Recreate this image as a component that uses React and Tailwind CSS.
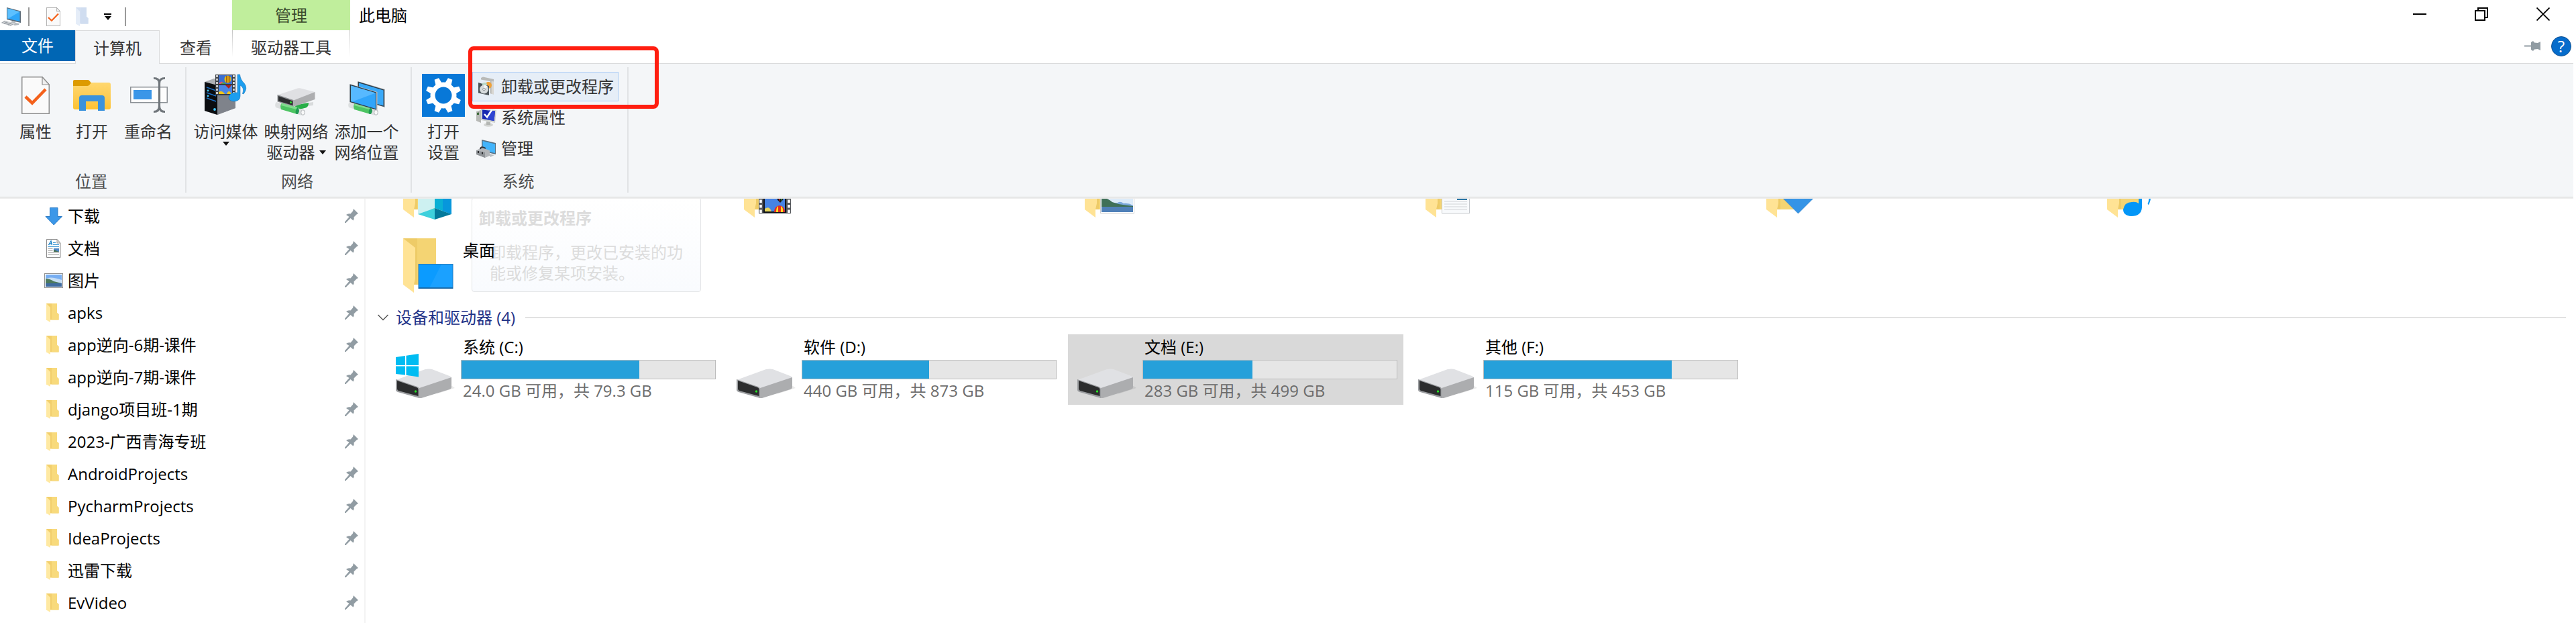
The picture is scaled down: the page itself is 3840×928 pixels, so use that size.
import React from "react";

function ComputerIcon() {
  return (
    <svg className="h-9 w-8 shrink-0" viewBox="0 0 32 36" aria-hidden="true">
      <path d="M10 4 L31 9.500 V27 L10 22 Z" fill="#5c6b78" />
      <path d="M11 5.500 L29.500 10.500 V25 L11 20.500 Z" fill="#2fa6f8" />
      <path d="M11 5.500 L29.500 10.500 L12 20.700 L11 20.500 Z" fill="#5cc0ff" />
      <path d="M18 24 L23 25 V27 L29 28 L28 30 L22 31 L15 28 Z" fill="#b3b9be" />
      <path d="M7 23.500 L23 28 L16 32 L1 27 Z" fill="#d3d6d9" />
      <path d="M5 25 L19 29.500 M3 26.500 L17 31 M11 25 L6 28.500 M17 26.500 L12 30.500" stroke="#989fa5" strokeWidth="1" />
    </svg>
  );
}

function CheckedPage({ className }) {
  return (
    <svg className={className} viewBox="0 0 42 56" preserveAspectRatio="none" aria-hidden="true">
      <path d="M.75 .75 H31 L41.250 12 V55.250 H.75 Z" fill="#fafafa" stroke="#8d8d8d" strokeWidth="1.500" />
      <path d="M31 .75 V12 H41.250 Z" fill="#efefef" stroke="#8d8d8d" strokeWidth="1.200" />
      <path d="M6 30 L16 39.500 L36 19" fill="none" stroke="#f4611b" strokeWidth="4.500" />
    </svg>
  );
}

function SmallFolder({ pale }) {
  return (
    <svg className="h-7 w-[19px]" viewBox="0 0 19 28" aria-hidden="true">
      <path d="M0 0 H16 V14 L18.500 16 V24.500 H0 Z" fill={pale ? "#d3dff1" : "#f2cf6c"} />
      <path d="M8 0 H16 V14 L18.500 16 V24.500 H8 Z" fill={pale ? "#d0ddf0" : "#f8da7c"} />
      <path d="M0 0 L6 6 V28 L0 24.500 Z" fill={pale ? "#e5edf8" : "#ffe9a2"} />
    </svg>
  );
}

function OpenFolderIcon() {
  return (
    <svg className="size-16" viewBox="0 0 64 64" aria-hidden="true">
      <defs>
        <linearGradient id="folderFront" x1="0" y1="0" x2="0" y2="1">
          <stop offset="0" stopColor="#ffd76f" />
          <stop offset=".6" stopColor="#fdcb51" />
          <stop offset="1" stopColor="#fdc22f" />
        </linearGradient>
      </defs>
      <path d="M4 11 Q4 9 6 9 H26 Q28 9 31 14 L27 20 H4 Z" fill="#dd9b00" />
      <path d="M4 18 H25 Q28 18 31 13 H57 Q60 13 60 16 V50 Q60 53 57 53 H7 Q4 53 4 50 Z" fill="url(#folderFront)" />
      <path d="M13 55 V36 Q13 32 17 32 H47 Q51 32 51 36 V55 H41 V41 H23 V55 Z" fill="#3a92dc" />
    </svg>
  );
}

function RenameIcon() {
  return (
    <svg className="size-16" viewBox="0 0 64 64" aria-hidden="true">
      <rect x="5.750" y="19.750" width="54.500" height="23" fill="#fdfdfd" stroke="#8c9196" strokeWidth="1.500" />
      <rect x="10" y="24" width="27" height="14" fill="#3a96e8" />
      <path d="M40 6.500 Q48.500 6.500 48.500 14 V48 Q48.500 56.500 40 56.500 M57 6.500 Q48.500 6.500 48.500 14 M48.500 48 Q48.500 56.500 57 56.500" fill="none" stroke="#71777c" strokeWidth="3.200" />
    </svg>
  );
}

function MediaIcon() {
  return (
    <svg className="size-16" viewBox="0 0 64 64" aria-hidden="true">
      <path d="M0 12 L14 7 L46 15 V51 L19 61 L0 55 Z" fill="#aeb1b5" />
      <path d="M0 12 L19 17 V61 L0 55 Z" fill="#0b0d10" />
      <path d="M19 17 L46 12 V51 L19 61 Z" fill="#7f838b" />
      <path d="M3 20 L17 25 M3 28 L17 33 M3 36 L17 41" stroke="#1b6fc4" strokeWidth="1.500" />
      <circle cx="5" cy="25" r="1.400" fill="#3fc8ff" />
      <circle cx="5" cy="33" r="1.400" fill="#3fc8ff" />
      <circle cx="15" cy="53" r="1.900" fill="#3fc8ff" />
      <rect x="16" y="1" width="30" height="31" fill="#3b3e42" />
      <path d="M18.500 2 V31 M43.500 2 V31" stroke="#e8e8e8" strokeWidth="2.500" strokeDasharray="3 2" />
      <rect x="21" y="2" width="20" height="13" fill="#3c6fd0" />
      <rect x="21" y="17" width="20" height="13" fill="#4a86e6" />
      <ellipse cx="34.500" cy="8" rx="5" ry="5.500" fill="#e8b80e" />
      <path d="M33 3 V13 M36.500 3 V13" stroke="#8a3b12" strokeWidth="1.300" />
      <path d="M21 15 Q25 8 30 15 Z" fill="#e0526b" />
      <path d="M24 15 Q28 11 32 15 Z" fill="#4aa53b" />
      <path d="M31 17 H40 L36 22 Z" fill="#b3201b" />
      <path d="M21 30 V27 Q26 24 30 30 Z M33 30 Q36 22 40 30 Z" fill="#f0c419" />
      <path d="M49 1 H52.500 Q53.500 9 59 14 Q65 21 58 30 L56.500 29.500 Q60 21 53 17 V33 Q53 41 43 41 Q35 40 36 34 Q38 27 49 28 Z" fill="#1b9eef" stroke="#1673b8" strokeWidth=".6" />
    </svg>
  );
}

function NetPipe() {
  return (
    <g>
      <path d="M2 42 L44 54 Q46 58 43 61.500 L38 61.500 L1 50 Q-1 45 2 42 Z" fill="#dcdfe0" />
      <path d="M10 43.500 L35 50.500 Q32 55 33 60 L9 53 Q7 47 10 43.500 Z" fill="#4cc462" />
      <path d="M10 43.500 L35 50.500 L33.500 53.500 L9 47 Z" fill="#7fdc8d" />
      <path d="M33.500 50 Q38 54 34 60 L31 59.500 Q29.500 54 33.500 50 Z" fill="#1f9a52" />
      <ellipse cx="41.500" cy="57.500" rx="2.800" ry="3.800" fill="#f7f8f8" stroke="#b3b7ba" strokeWidth="1" />
    </g>
  );
}

function MapDriveIcon() {
  return (
    <svg className="size-16" viewBox="0 0 64 64" aria-hidden="true">
      <path d="M44 44 L57 42 V47 L48 48 Z" fill="#d8dbdc" />
      <path d="M28 47 L50 43 Q50 49 46 50.500 L36 53 Z" fill="#28ae48" />
      <NetPipe />
      <path d="M3.500 31.500 L34 21.500 Q36 21 38 21.500 L59.500 27 L27.500 40 Z" fill="#dfe0e3" />
      <path d="M27.500 39.500 L59.500 27 V38 L29 48.500 H27.500 Z" fill="#adaeb0" />
      <path d="M3.500 31 L27.500 39 V48.500 L3.500 41.500 Z" fill="#8e9194" />
      <path d="M5 33 L26.500 40.500 V47 L5 40.500 Z" fill="#2c2e30" />
      <circle cx="23.500" cy="42.500" r="1.500" fill="#2ee02e" />
    </svg>
  );
}

function AddNetworkIcon() {
  return (
    <svg className="size-16" viewBox="0 0 64 64" aria-hidden="true">
      <g transform="translate(4 0)">
        <NetPipe />
      </g>
      <path d="M18.500 11 L59 23 V50 L18.500 38 Z" fill="#aeb4b9" />
      <path d="M18.500 11.500 L57.500 23.500 V49 L18.500 38 Z" fill="#2c3b46" />
      <path d="M20 13.500 L56.500 24.500 V47.500 L20 37 Z" fill="#3aa9f8" />
      <path d="M6.500 15 L47.500 27 V54 L6.500 42 Z" fill="#b9bec2" />
      <path d="M6.500 15.500 L46 27.500 V53.500 L6.500 42 Z" fill="#2c3b46" />
      <path d="M8 17.500 L45 28.500 V52 L8 41 Z" fill="#31a5fa" />
      <path d="M8 17.500 L45 28.500 L10 41.500 L8 41 Z" fill="#57b9ff" />
    </svg>
  );
}

function GearIcon() {
  const teeth = [22.5, 67.5, 112.5, 157.5, 202.5, 247.5, 292.5, 337.5];
  return (
    <svg className="size-16" viewBox="0 0 64 64" aria-hidden="true">
      <rect width="64" height="64" fill="#0878d8" />
      {teeth.map((a) => (
        <path key={a} d="M27 15 L28.500 5.500 H35.500 L37 15 Z" fill="#fff" transform={`rotate(${a} 32 32)`} />
      ))}
      <circle cx="32" cy="32" r="16" fill="none" stroke="#fff" strokeWidth="7" />
    </svg>
  );
}

function UninstallIcon() {
  return (
    <svg className="size-8" viewBox="0 0 32 32" aria-hidden="true">
      <path d="M8 3 L11 1.500 L27 5 V9 L8 5.500 Z" fill="#b9bab8" />
      <path d="M22 8 L27 8.500 V28 L22 26 Z" fill="#d8d7d2" />
      <path d="M22 8 L23.500 8 V27 L22 26 Z" fill="#b2b1ac" />
      <circle cx="19" cy="14" r="5" fill="#f0a23a" />
      <path d="M4 10 L9 11.500 L20 15 V29 L4 25.500 Z" fill="#4b5459" />
      <path d="M10 11 Q17 8 17 14 L10 16 Z" fill="#b9d9c8" />
      <circle cx="12.500" cy="20" r="6.500" fill="#d6dbdd" />
      <path d="M12.500 13.500 A6.500 6.500 0 0 1 18 16 L12.500 20 Z" fill="#f4f6f7" />
      <circle cx="12.500" cy="20" r="1.800" fill="#fff" stroke="#8a9196" strokeWidth="1" />
    </svg>
  );
}

function SystemIcon() {
  return (
    <svg className="size-8" viewBox="0 0 32 32" aria-hidden="true">
      <path d="M1 7 L8 5 V24 L1 21 Z" fill="#b7b9b6" />
      <path d="M2 9 L5 8.500 V12 L2 12 Z" fill="#3d6a3a" />
      <path d="M8 3 L31 5 L29 24 L8 20 Z" fill="#cfd2cf" />
      <path d="M10 4.500 L29 6.500 L27.500 21 L10 18 Z" fill="#1828b0" />
      <path d="M20 5.500 L29 6.500 L27.500 21 L16 19 Z" fill="#2f45d2" />
      <path d="M13 11 L17 15.500 L24 5" fill="none" stroke="#fff" strokeWidth="2.500" />
      <ellipse cx="19" cy="27" rx="7" ry="2.800" fill="#d2d4d2" />
      <path d="M16 22 L22 23 V27 H16 Z" fill="#b3b6b3" />
    </svg>
  );
}

function ManageIcon() {
  return (
    <svg className="size-8" viewBox="0 0 32 32" aria-hidden="true">
      <path d="M9 3 L30 8 V25 L9 20 Z" fill="#567083" />
      <path d="M10.500 5 L29 9.500 V23 L10.500 19 Z" fill="#42b4fb" />
      <path d="M20 24 L28 26 L22 29 Z" fill="#b5bbc0" />
      <path d="M1 19 L9 15 L21 19 V27 L14 30 L1 25 Z" fill="#b2b5b8" />
      <path d="M1 19 L14 22 V30 L1 25 Z" fill="#8f9397" />
      <path d="M7 17 Q8 12 15 16" fill="none" stroke="#32363a" strokeWidth="2" />
      <path d="M4 20 V23 M10 21.500 V24.500" stroke="#2a2c2e" strokeWidth="2" />
    </svg>
  );
}

function DownloadIcon() {
  return (
    <svg className="size-7" viewBox="0 0 28 28" aria-hidden="true">
      <path d="M8.500 1.500 H20 V14.500 H26.500 L14.250 27 L2 14.500 H8.500 Z" fill="#3b97e8" stroke="#2c7cc6" strokeWidth="1" />
    </svg>
  );
}

function DocumentIcon() {
  return (
    <svg className="h-7 w-[22px]" viewBox="0 0 22 28" aria-hidden="true">
      <path d="M.5 .5 H16 L21 6 V27.500 H.5 Z" fill="#fbfbfb" stroke="#8c8c8c" />
      <path d="M16 .5 V6 H21 Z" fill="#e8e8e8" stroke="#8c8c8c" strokeWidth=".8" />
      <path d="M3.500 9 L7 3 L8.500 9 M5 7 H8" fill="none" stroke="#1b82c8" strokeWidth="1.400" />
      <path d="M10 5.500 H14 M10 8.500 H19 M2.500 11.500 H19" stroke="#3a95d4" />
      <rect x="11" y="14" width="8" height="5" fill="#4f86c6" />
      <path d="M11 19 V16 L19 19 Z" fill="#3e6a4b" />
      <path d="M2.500 14.500 H9.500 M2.500 17.500 H9.500 M2.500 20.500 H19 M2.500 23.500 H19" stroke="#a9a9a9" />
    </svg>
  );
}

function PictureIcon() {
  return (
    <svg className="h-[22px] w-7" viewBox="0 0 28 22" aria-hidden="true">
      <rect x=".5" y=".5" width="27" height="21" fill="#fff" stroke="#929292" />
      <rect x="2" y="2" width="24" height="8" fill="#77aef2" />
      <path d="M2 8 Q10 4 26 10 V15 H2 Z" fill="#c5ddf4" />
      <path d="M2 8 Q8 8 14 12 L26 15 H2 Z" fill="#4d7a5e" />
      <rect x="2" y="15" width="24" height="5" fill="#3f6ba0" />
    </svg>
  );
}

function PinIcon() {
  return (
    <svg className="size-[22px]" viewBox="0 0 22 22" aria-hidden="true">
      <path d="M14 0 L21 7 L18.500 8.500 L14.500 12.500 Q15.500 15 13.500 17.500 L9.500 14 L2.500 21 L1 21 L1 19.500 L7.500 12 L3 9 Q6 6.500 9.500 7.500 L13 3.500 Z" fill="#919ca3" />
    </svg>
  );
}

function Overlay({ kind }) {
  switch (kind) {
    case "objects":
      return (
        <g>
          <path d="M33 30 L58 20 V67 L33 76 Z" fill="#cdf1f1" />
          <path d="M58 20 L83 30 V76 L58 67 Z" fill="#0ab0d4" />
          <path d="M70 25 L83 30 V76 L70 71 Z" fill="#0797dc" />
          <path d="M33 76 L58 67 V84 Z" fill="#3ed0dc" />
          <path d="M83 76 L58 67 V84 Z" fill="#04799b" />
        </g>
      );
    case "video":
      return (
        <g>
          <rect x="33" y="30" width="48" height="45" fill="#55585c" />
          <path d="M36 32 V74 M78 32 V74" stroke="#fff" strokeWidth="3.500" strokeDasharray="4.500 3" />
          <rect x="40" y="30" width="34" height="44" fill="#10131a" />
          <rect x="42" y="30" width="30" height="42" fill="#4683e4" />
          <path d="M59 50 H71 Q70 55 65 59 Q60 55 59 50 Z" fill="#161616" />
          <path d="M62 50 H65 V58 Z" fill="#d32626" />
          <path d="M66 50 H69 L66 57 Z" fill="#3cab3c" />
          <path d="M42 68 Q49 63 52 72 H42 Z" fill="#e6d55c" />
          <path d="M56 73 Q56 64 64 63 Q72 64 72 73 Z" fill="#e32b22" />
          <path d="M59 73 Q59 66 62 64 V73 Z M66 64 Q70 66 69 73 H66 Z" fill="#ffdc1f" />
        </g>
      );
    case "picture":
      return (
        <g>
          <rect x="34.500" y="30" width="50" height="44.500" fill="#fff" stroke="#cfcfcf" />
          <rect x="36" y="40" width="47" height="25" fill="#dcebfa" />
          <path d="M50 60 L60 59 Q64 56 69 60 Q76 59 83 63 V65 H50 Z" fill="#7ba8dc" />
          <path d="M36 53 Q43 50 52 58 Q60 61 68 62 L83 64 V65 H36 Z" fill="#3f7058" />
          <rect x="36" y="65" width="47" height="8" fill="#4f80b8" />
        </g>
      );
    case "document":
      return (
        <g>
          <rect x="35.500" y="30" width="41" height="44.500" fill="#f8fafc" stroke="#c4c8cc" />
          <rect x="58" y="44" width="15" height="11" fill="#2a75a5" />
          <path d="M39 57 H73 M39 61 H73 M39 65 H73 M39 69 H73" stroke="#d0d3d6" />
        </g>
      );
    case "download":
      return <path d="M50 30 H67 V53 H80.500 L58.500 75 L36.500 53 H50 Z" fill="#3594e6" stroke="#2f80c8" strokeWidth=".6" />;
    case "music":
      return (
        <g fill="#0396f7">
          <path d="M58 30 H63 V66 Q62 79 47 79 Q35 78 35 69 Q37 58 48 58 Q54 57 58 60 Z" />
          <path d="M75 46 Q78 52 73 62 L71.500 61 Q75 53 71 46 Z" />
        </g>
      );
    default:
      return (
        <g>
          <rect x="34" y="38.500" width="51" height="36" fill="#0b9bff" stroke="#2777b5" />
          <path d="M68 39 L50 74 H84.500 V39 Z" fill="#27a5ff" opacity=".6" />
          <path d="M34 74 H85" stroke="#155f9b" strokeWidth="1.500" />
        </g>
      );
  }
}

function LibraryFolder({ kind }) {
  return (
    <svg className="h-[86px] w-[97px] shrink-0" viewBox="0 0 97 86" aria-hidden="true">
      <path d="M11 0 H60 V69 H24 Z" fill="#eecb67" />
      <path d="M32 0 H60 V69 H32 Z" fill="#f4d473" />
      <path d="M11 0 L29 14 V60 L27 69 V81 L11 69 Z" fill="#ffe395" />
      <Overlay kind={kind} />
    </svg>
  );
}

function DriveIcon({ system }) {
  return (
    <svg className="h-[68px] w-[97px] shrink-0" viewBox="0 0 97 68" aria-hidden="true">
      <path d="M60 60 L84 48 L88 51 L42 66 Z" fill="#000" opacity=".08" />
      <path d="M0 39 L44 23 Q50 22 54 23 L80 33 Q83 34 83 36 L35 52 Z" fill="#e0e1e4" />
      <path d="M35 51 L83 35 V50 Q83 52 80 53 L38 66 L35 66 Z" fill="#acadaf" />
      <path d="M0 38 L32 49 Q35 50 35 53 V66 L3 57 Q0 56 0 54 Z" fill="#9b9da0" />
      <path d="M2 40 L31 50 Q33.500 51 33.500 53 V63 L4 55 Q2 54 2 52 Z" fill="#2c2d2e" />
      <circle cx="29.500" cy="56" r="1.700" fill="#25e325" />
      {system && (
        <g fill="#00bcf2">
          <path d="M0 5 L14 3 V17 H0 Z" />
          <path d="M15.500 2.700 L34 0 V17 H15.500 Z" />
          <path d="M0 18.500 H14 V31.500 L0 30 Z" />
          <path d="M15.500 18.500 H34 V34.500 L15.500 31.700 Z" />
        </g>
      )}
    </svg>
  );
}

function Caret({ className }) {
  return (
    <svg className={className} viewBox="0 0 10 6" aria-hidden="true">
      <path d="M0 0 H10 L5 6 Z" fill="#111" />
    </svg>
  );
}

function BigCommand({ icon, lines, caret, className }) {
  return (
    <button type="button" className={`flex flex-col items-center leading-[31px] whitespace-nowrap ${className}`}>
      <span className="mb-1.5 flex h-16 items-center">{icon}</span>
      {lines.map((line, i) => (
        <span key={line} className="flex items-center gap-1.5">
          {line}
          {caret === "inline" && i === lines.length - 1 && <Caret className="h-1.5 w-2.5" />}
        </span>
      ))}
      {caret === "below" && <Caret className="h-1.5 w-2.5" />}
    </button>
  );
}

function SmallCommand({ icon, label, highlighted }) {
  return (
    <button
      type="button"
      className={
        highlighted
          ? "flex h-11 items-center gap-1.5 border border-[#a8cbf5] bg-[#e6eef7] pr-1.5 pl-1 whitespace-nowrap"
          : "flex h-11 items-center gap-1.5 border border-transparent pr-1.5 pl-1 whitespace-nowrap"
      }
    >
      {icon}
      {label}
    </button>
  );
}

function Group({ label, className, children }) {
  return (
    <section aria-label={label} className={`flex flex-col justify-between border-r-2 border-[#e1e3e5] ${className}`}>
      <div className="flex items-start">{children}</div>
      <h2 className="pr-1 pb-0.5 text-center leading-[30px] text-[#4c4c4c]">{label}</h2>
    </section>
  );
}

const pinned = [
  { name: "下载", icon: <DownloadIcon /> },
  { name: "文档", icon: <DocumentIcon /> },
  { name: "图片", icon: <PictureIcon /> },
  { name: "apks" },
  { name: "app逆向-6期-课件" },
  { name: "app逆向-7期-课件" },
  { name: "django项目班-1期" },
  { name: "2023-广西青海专班" },
  { name: "AndroidProjects" },
  { name: "PycharmProjects" },
  { name: "IdeaProjects" },
  { name: "迅雷下载" },
  { name: "EvVideo" },
];

const libraries = ["objects", "video", "picture", "document", "download", "music"];

const drives = [
  { name: "系统 (C:)", info: "24.0 GB 可用，共 79.3 GB", used: 70, system: true },
  { name: "软件 (D:)", info: "440 GB 可用，共 873 GB", used: 50 },
  { name: "文档 (E:)", info: "283 GB 可用，共 499 GB", used: 43, selected: true },
  { name: "其他 (F:)", info: "115 GB 可用，共 453 GB", used: 74 },
];

function TitleBar() {
  return (
    <header className="flex h-[45px]">
      <div className="flex w-[346px] shrink-0 items-center pt-1">
        <ComputerIcon />
        <span className="ml-2.5 h-7 w-0.5 bg-[#9a9a9a]" />
        <button type="button" aria-label="属性" className="ml-[25px]">
          <CheckedPage className="h-7 w-[21px]" />
        </button>
        <button type="button" aria-label="新建文件夹" className="ml-[23px]">
          <SmallFolder pale />
        </button>
        <button type="button" aria-label="自定义快速访问工具栏" className="ml-[23px] flex flex-col items-center gap-0.5">
          <span className="h-0.5 w-[11px] bg-black" />
          <Caret className="h-1.5 w-2.5" />
        </button>
        <span className="ml-5 h-7 w-0.5 bg-[#9a9a9a]" />
      </div>
      <div className="flex w-44 shrink-0 items-center justify-center bg-[#c0ee9c] text-[#3a4a2c]">管理</div>
      <h1 className="flex grow items-center pl-[13px] text-black">此电脑</h1>
      <div className="flex pr-[3px] pb-1">
        <button type="button" aria-label="最小化" className="flex w-[92px] items-center justify-center">
          <svg className="size-5" viewBox="0 0 20 20"><path d="M0 10 H20" stroke="#000" strokeWidth="2" /></svg>
        </button>
        <button type="button" aria-label="向下还原" className="flex w-[92px] items-center justify-center">
          <svg className="size-5" viewBox="0 0 20 20" fill="none" stroke="#000" strokeWidth="2">
            <path d="M1 5 H15 V19 H1 Z M5 5 V1 H19 V15 H15" />
          </svg>
        </button>
        <button type="button" aria-label="关闭" className="flex w-[92px] items-center justify-center">
          <svg className="size-5" viewBox="0 0 20 20"><path d="M.5 .5 L19.500 19.500 M19.500 .5 L.5 19.500" stroke="#000" strokeWidth="1.800" /></svg>
        </button>
      </div>
    </header>
  );
}

function TabRow() {
  return (
    <nav className="flex h-[49px]" aria-label="功能区选项卡">
      <button type="button" className="h-[46px] w-28 bg-[#0066b4] text-white">文件</button>
      <button type="button" className="relative z-30 -mb-px w-[126px] border border-b-0 border-[#dadbdc] bg-[#f4f6f8] pt-0.5">计算机</button>
      <button type="button" className="w-[108px] pt-0.5">查看</button>
      <div className="flex w-44">
        <span className="h-10 w-px bg-linear-to-b from-[#c4c4c4] to-white" />
        <button type="button" className="grow pt-0.5">驱动器工具</button>
        <span className="h-10 w-px bg-linear-to-b from-[#c4c4c4] to-white" />
      </div>
      <div className="ml-auto flex items-center gap-4 pr-[7px] pb-0.5">
        <button type="button" aria-label="固定功能区">
          <svg className="h-[15px] w-6" viewBox="0 0 24 15">
            <path d="M0 6.500 H10 V2 L13 0 L15 2.500 L20 3 L24 1 V14 L20 12 L15 12.500 L13 15 L10 13 V8.500 H0 Z" fill="#919ca3" />
          </svg>
        </button>
        <button type="button" aria-label="帮助" className="size-[30px] rounded-full border border-[#125292] bg-[#066ccb] leading-7 text-white">
          ?
        </button>
      </div>
    </nav>
  );
}

function Ribbon() {
  return (
    <div className="relative z-20 mr-1 flex h-[200px] border-y border-[#dadbdc] bg-[#f4f6f8] pt-[5px] pb-[6px] shadow-[0_2px_0_#ececec]">
      <Group label="位置" className="w-[278px]">
        <BigCommand className="ml-[11px] w-[84px] pt-2.5" icon={<CheckedPage className="h-14 w-[42px]" />} lines={["属性"]} />
        <BigCommand className="w-[84px] pt-2.5" icon={<OpenFolderIcon />} lines={["打开"]} />
        <BigCommand className="w-[84px] pt-2.5" icon={<RenameIcon />} lines={["重命名"]} />
      </Group>
      <Group label="网络" className="w-[336px]">
        <BigCommand className="ml-1.5 w-[105px] pt-2.5" icon={<MediaIcon />} lines={["访问媒体"]} caret="below" />
        <BigCommand className="w-[105px] pt-2.5" icon={<MapDriveIcon />} lines={["映射网络", "驱动器"]} caret="inline" />
        <BigCommand className="w-[105px] pt-2.5" icon={<AddNetworkIcon />} lines={["添加一个", "网络位置"]} />
      </Group>
      <Group label="系统" className="w-[323px]">
        <BigCommand className="ml-1 w-[86px] pt-2.5" icon={<GearIcon />} lines={["打开", "设置"]} />
        <div className="flex flex-col items-start gap-0.5 pt-[7px]">
          <div className="relative">
            <SmallCommand highlighted icon={<UninstallIcon />} label="卸载或更改程序" />
            <div className="pointer-events-none absolute -top-[38px] -left-1.5 h-[93px] w-[284px] rounded-lg border-[6px] border-[#ff1e10]" />
          </div>
          <SmallCommand icon={<SystemIcon />} label="系统属性" />
          <SmallCommand icon={<ManageIcon />} label="管理" />
        </div>
      </Group>
    </div>
  );
}

function Sidebar() {
  return (
    <aside className="w-[545px] shrink-0 border-r-2 border-[#f3f3f3] pt-1">
      <ul>
        {pinned.map((item) => (
          <li key={item.name}>
            <a href="#" className="flex h-12 items-center pr-2 pl-16 text-black">
              <span className="flex w-[37px] shrink-0 justify-start">
                <span className="flex w-8 justify-center">{item.icon || <span className="mr-1"><SmallFolder /></span>}</span>
              </span>
              <span className="grow">{item.name}</span>
              <PinIcon />
            </a>
          </li>
        ))}
      </ul>
    </aside>
  );
}

function DriveTile({ drive }) {
  return (
    <article className={`flex h-[105px] w-[500px] shrink-0 pr-[9px] pl-3.5 ${drive.selected ? "bg-[#d9d9d9]" : "bg-white"}`}>
      <div className="pt-[29px]">
        <DriveIcon system={drive.system} />
      </div>
      <div className="grow pt-1 leading-[30px]">
        <h3 className="pl-[3px] text-black">{drive.name}</h3>
        <div
          role="meter"
          aria-label={drive.name}
          aria-valuenow={drive.used}
          aria-valuemin={0}
          aria-valuemax={100}
          className="mt-1 h-[29px] border border-[#bcbcbc] bg-[#e6e6e6]"
        >
          <div className="h-full bg-[#26a0da]" style={{ width: `${drive.used}%` }} />
        </div>
        <p className="mt-0.5 pl-[3px] text-[#6d6d6d]">{drive.info}</p>
      </div>
    </article>
  );
}

function Content() {
  return (
    <main className="relative min-w-0 grow">
      <div role="tooltip" className="absolute top-0 left-[158px] h-[141px] w-[342px] rounded-sm border border-[#e4e5e7] bg-linear-to-b from-white to-[#f9fbfe] leading-[31px] text-[#dcdcdc]">
        <p className="pt-3.5 pl-2.5 font-bold">卸载或更改程序</p>
        <p className="pt-5 pr-6 pl-[26px]">卸载程序，更改已安装的功能或修复某项安装。</p>
      </div>
      <div className="relative pl-[31px]">
        <div className="flex h-[46px] items-end gap-2 overflow-hidden pb-[11px]">
          {libraries.map((kind) => (
            <div key={kind} className="w-[500px] shrink-0 pl-3.5">
              <LibraryFolder kind={kind} />
            </div>
          ))}
        </div>
        <div className="mt-[3px] flex h-[105px] w-[500px] pt-3 pl-3.5">
          <LibraryFolder kind="desktop" />
          <h3 className="pt-0.5 pl-[3px] leading-[31px] text-black">桌面</h3>
        </div>
      </div>
      <div className="flex h-[50px] items-center pr-[15px] pl-[18px]">
        <button type="button" aria-expanded="true" className="flex items-center gap-[11px] whitespace-nowrap text-[#1e3287]">
          <svg className="h-2.5 w-4" viewBox="0 0 16 10" aria-hidden="true">
            <path d="M.5 1 L8 8.500 L15.500 1" fill="none" stroke="#555" strokeWidth="1.500" />
          </svg>
          设备和驱动器 (4)
        </button>
        <span className="ml-[15px] h-0.5 grow bg-[#e2e2e2]" />
      </div>
      <div className="flex flex-wrap gap-2 pl-[31px]">
        {drives.map((d) => (
          <DriveTile key={d.name} drive={d} />
        ))}
      </div>
    </main>
  );
}

export default function App() {
  return (
    <div className="flex min-h-screen flex-col overflow-hidden bg-white font-['Open_Sans','Noto_Sans_CJK_SC',sans-serif] text-2xl text-[#333]">
      <TitleBar />
      <TabRow />
      <Ribbon />
      <div className="flex grow">
        <Sidebar />
        <Content />
      </div>
    </div>
  );
}
